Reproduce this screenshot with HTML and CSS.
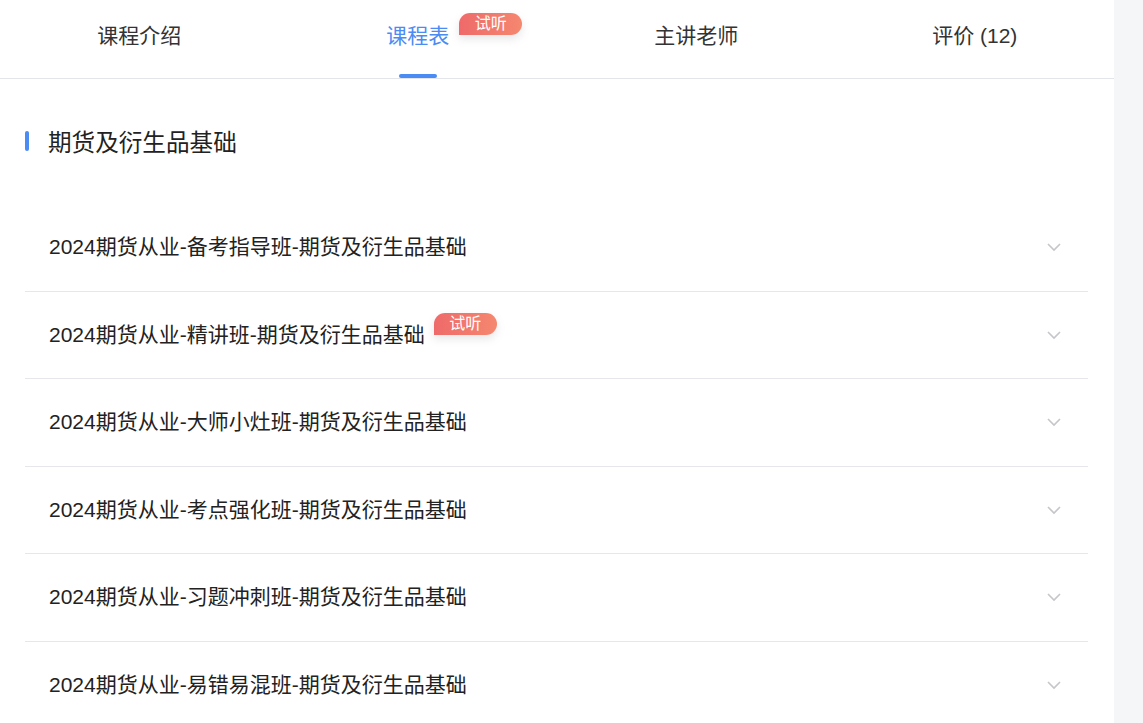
FILE: index.html
```html
<!DOCTYPE html>
<html>
<head>
  <meta charset="utf-8">
  <title>课程表</title>
  <link rel="stylesheet" href="styles.css">
</head>
<body>
  <div class="main">
    <!-- tabs -->
    <div class="tabs">
      <div class="tab"><span class="tab-label">课程介绍</span></div>
      <div class="tab active">
        <span class="tab-label">课程表<span class="badge tab-badge">试听</span></span>
        <i class="tab-line"></i>
      </div>
      <div class="tab"><span class="tab-label">主讲老师</span></div>
      <div class="tab"><span class="tab-label">评价 (12)</span></div>
    </div>

    <!-- section title -->
    <div class="section-title">
      <i class="bar"></i>
      <h2>期货及衍生品基础</h2>
    </div>

    <!-- course list -->
    <div class="course-list">
      <div class="course-row">
        <div class="course-name">2024期货从业-备考指导班-期货及衍生品基础</div>
        <svg class="arrow" width="16" height="10" viewBox="0 0 16 10"><path d="M2 2l6 6 6-6" fill="none" stroke="#c6c6ca" stroke-width="1.6"/></svg>
      </div>
      <div class="course-row">
        <div class="course-name">2024期货从业-精讲班-期货及衍生品基础<span class="badge row-badge">试听</span></div>
        <svg class="arrow" width="16" height="10" viewBox="0 0 16 10"><path d="M2 2l6 6 6-6" fill="none" stroke="#c6c6ca" stroke-width="1.6"/></svg>
      </div>
      <div class="course-row">
        <div class="course-name">2024期货从业-大师小灶班-期货及衍生品基础</div>
        <svg class="arrow" width="16" height="10" viewBox="0 0 16 10"><path d="M2 2l6 6 6-6" fill="none" stroke="#c6c6ca" stroke-width="1.6"/></svg>
      </div>
      <div class="course-row">
        <div class="course-name">2024期货从业-考点强化班-期货及衍生品基础</div>
        <svg class="arrow" width="16" height="10" viewBox="0 0 16 10"><path d="M2 2l6 6 6-6" fill="none" stroke="#c6c6ca" stroke-width="1.6"/></svg>
      </div>
      <div class="course-row">
        <div class="course-name">2024期货从业-习题冲刺班-期货及衍生品基础</div>
        <svg class="arrow" width="16" height="10" viewBox="0 0 16 10"><path d="M2 2l6 6 6-6" fill="none" stroke="#c6c6ca" stroke-width="1.6"/></svg>
      </div>
      <div class="course-row">
        <div class="course-name">2024期货从业-易错易混班-期货及衍生品基础</div>
        <svg class="arrow" width="16" height="10" viewBox="0 0 16 10"><path d="M2 2l6 6 6-6" fill="none" stroke="#c6c6ca" stroke-width="1.6"/></svg>
      </div>
    </div>
  </div>
</body>
</html>
```

FILE: styles.css
```css
* {
  box-sizing: border-box;
  margin: 0;
  padding: 0;
  font-family: "Liberation Sans", "Noto Sans CJK SC", sans-serif;
}

body {
  background-color: #f5f6f8;
  height: 723px;
  overflow: hidden;
}

.main {
  width: 1114px;
  min-height: 723px;
  background-color: white;
}

/* tabs */
.tabs {
  display: flex;
  height: 79px;
  border-bottom: 1px solid #e4e5ea;
}

.tab {
  flex: 1;
  position: relative;
  display: flex;
  justify-content: center;
  padding-top: 24px;
  font-size: 21px;
  line-height: 24px;
  color: #333;
}

.tab.active {
  color: #4b8bf4;
}

.tab-label {
  position: relative;
}

.tab-line {
  position: absolute;
  left: 50%;
  bottom: 0;
  width: 38px;
  height: 4px;
  margin-left: -19px;
  border-radius: 2px;
  background-color: #4b8bf4;
}

.badge {
  display: inline-block;
  width: 63px;
  height: 22px;
  line-height: 22px;
  text-align: center;
  font-size: 16px;
  color: white;
  border-radius: 11px 11px 11px 0;
  background: linear-gradient(90deg, #ee6a6a, #f5876f);
  box-shadow: 0 4px 8px rgba(120, 120, 140, 0.18);
}

.tab-badge {
  position: absolute;
  left: 100%;
  top: -11px;
  margin-left: 10px;
}

/* section title */
.section-title {
  display: flex;
  align-items: center;
  padding-left: 25px;
  margin-top: 47px;
  height: 30px;
}

.bar {
  width: 4px;
  height: 20px;
  border-radius: 2px;
  background-color: #4b8bf4;
}

.section-title h2 {
  margin-left: 19px;
  font-size: 23.6px;
  font-weight: normal;
  color: #222;
}

/* course list */
.course-list {
  margin: 48px 26px 0 25px;
}

.course-row {
  display: flex;
  align-items: center;
  justify-content: space-between;
  height: 87.5px;
  padding: 0 26px 0 24px;
  border-bottom: 1px solid #e6e6eb;
}

.course-name {
  display: flex;
  align-items: flex-start;
  font-size: 21px;
  line-height: 24px;
  color: #222;
}

.row-badge {
  margin-left: 9px;
  margin-top: -10px;
}
```
